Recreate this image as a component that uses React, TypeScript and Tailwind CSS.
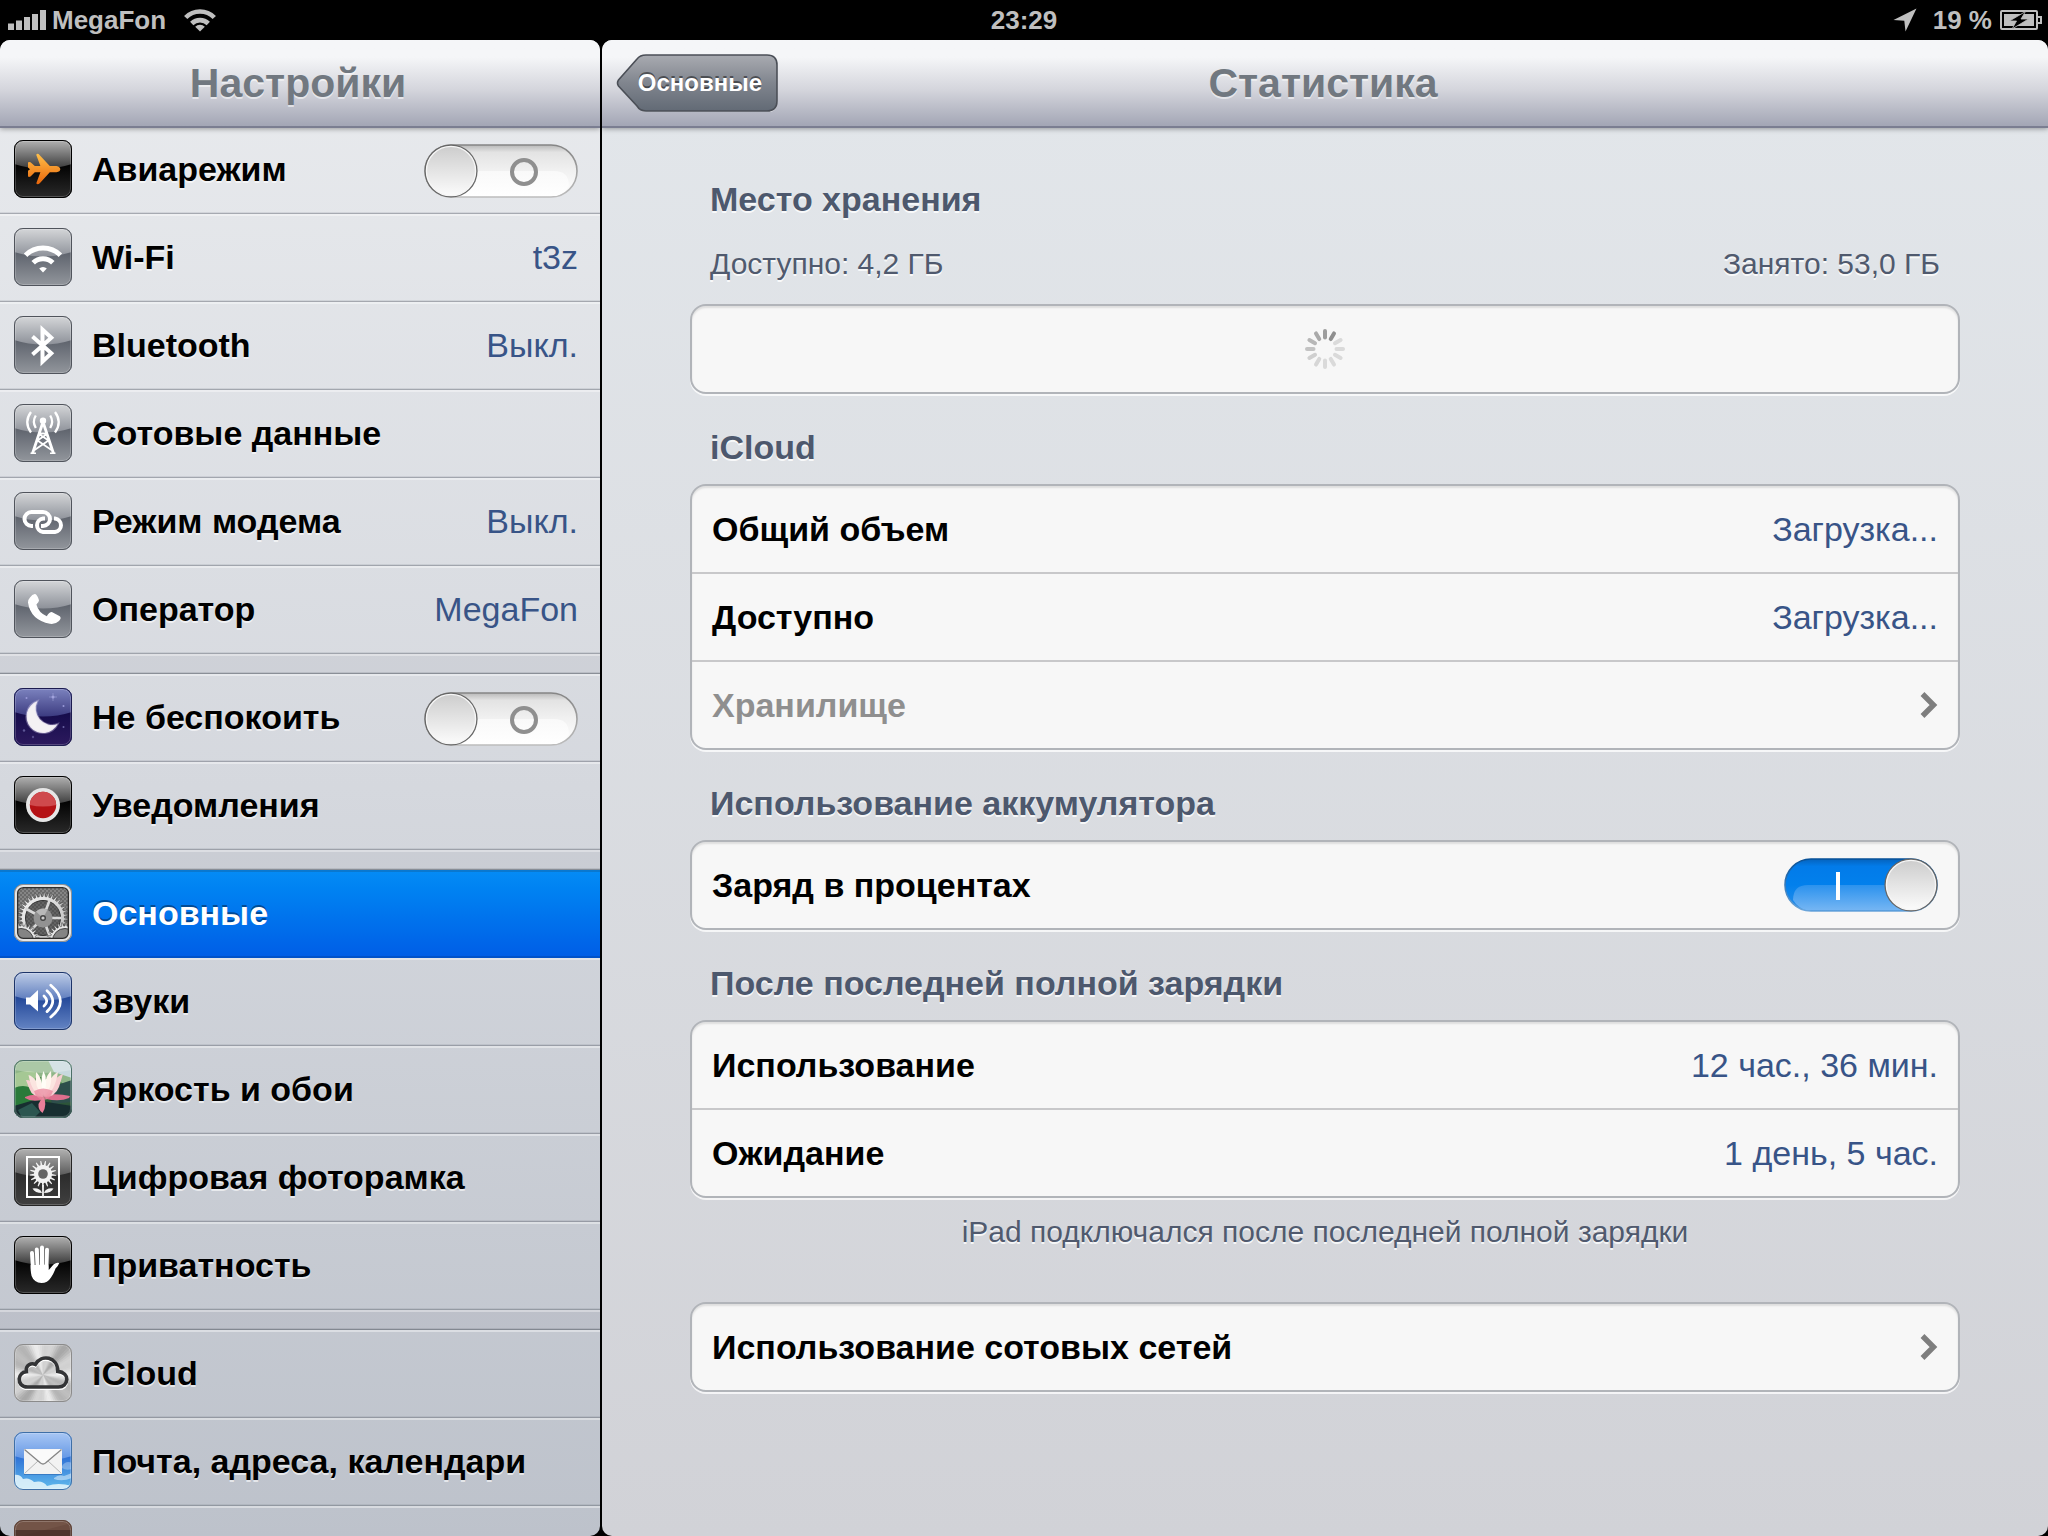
import { useState } from "react";
import type { ReactNode } from "react";

type TileProps = {
  id: string;
  colors: [string, string, string, string];
  edge: string;
  gloss?: boolean;
  children?: ReactNode;
};

// Rounded app tile: two-part gradient with the curved glass highlight on top
function Tile({ id, colors, edge, gloss = true, children }: TileProps) {
  return (
    <svg viewBox="0 0 58 58" className="size-[58px] shrink-0" aria-hidden="true">
      <defs>
        <linearGradient id={`${id}-base`} x1="0" y1="0" x2="0" y2="1">
          <stop offset="0.4" stopColor={colors[2]} />
          <stop offset="1" stopColor={colors[3]} />
        </linearGradient>
        <linearGradient id={`${id}-gloss`} x1="0" y1="0" x2="0" y2="1">
          <stop offset="0" stopColor={colors[0]} />
          <stop offset="1" stopColor={colors[1]} />
        </linearGradient>
        <clipPath id={`${id}-clip`}>
          <rect x="0" y="0" width="58" height="58" rx="9" />
        </clipPath>
      </defs>
      <g clipPath={`url(#${id}-clip)`}>
        <rect width="58" height="58" fill={`url(#${id}-base)`} />
        {gloss && <path d="M0 0H58V24Q29 33 0 24Z" fill={`url(#${id}-gloss)`} />}
        {children}
      </g>
      <rect x="1.5" y="1.5" width="55" height="55" rx="7.5" fill="none" stroke="#fff" strokeOpacity="0.2" />
      <rect x="0.5" y="0.5" width="57" height="57" rx="8.5" fill="none" stroke={edge} />
    </svg>
  );
}

const GRAY: [string, string, string, string] = ["#d6d8da", "#8d9199", "#5c616b", "#93979d"];
const BLACK: [string, string, string, string] = ["#b4b4b4", "#3a3a3a", "#000000", "#2a2a2a"];

function gearPath(cx: number, cy: number, outer: number, inner: number, teeth: number) {
  const pts: string[] = [];
  for (let i = 0; i < teeth; i++) {
    const a = (i / teeth) * Math.PI * 2;
    const s = (Math.PI * 2) / teeth;
    [
      [inner, a],
      [outer, a + s * 0.18],
      [outer, a + s * 0.38],
      [inner, a + s * 0.56],
    ].forEach(([r, t]) => {
      pts.push(`${(cx + r * Math.cos(t)).toFixed(2)} ${(cy + r * Math.sin(t)).toFixed(2)}`);
    });
  }
  return `M${pts.join("L")}Z`;
}

function AirplaneIcon() {
  return (
    <Tile id="air" colors={BLACK} edge="#000">
      <defs>
        <linearGradient id="air-fill" x1="0" y1="0" x2="0" y2="1">
          <stop offset="0" stopColor="#ffc04a" />
          <stop offset="1" stopColor="#e8650a" />
        </linearGradient>
      </defs>
      <path
        d="M14 22.5Q14.5 21.5 16.5 22.2L20.8 26H26.4L22.3 15Q22.5 13.2 24.6 14L35.8 26H42.5Q46.3 27 46.3 29.2Q46.3 31.5 42.5 32.3H35.8L26 43Q23.5 45.3 22.3 43.3L26.4 32.3H20.8L16.5 36.6Q14.5 37.4 14 36.2V30.8L16 29.2L14 27.6Z"
        fill="url(#air-fill)"
      />
    </Tile>
  );
}

function WifiIcon() {
  return (
    <Tile id="wifi" colors={GRAY} edge="#50545c">
      <g fill="none" stroke="#fff" strokeWidth="5">
        <path d="M11.6 27.2A24.5 24.5 0 0 1 46.4 27.2" />
        <path d="M19.2 34.8A14 14 0 0 1 38.8 34.8" />
      </g>
      <path d="M29 44.4L25.2 40.6A5.4 5.4 0 0 1 32.8 40.6Z" fill="#fff" />
    </Tile>
  );
}

function BluetoothIcon() {
  return (
    <Tile id="bt" colors={GRAY} edge="#50545c">
      <path d="M18.5 20.5L37.3 37.2L28.5 45.6V13.6L37.3 21.8L18.5 38.5" fill="none" stroke="#fff" strokeWidth="4" />
    </Tile>
  );
}

function TowerIcon() {
  return (
    <Tile id="tower" colors={GRAY} edge="#50545c">
      <circle cx="29" cy="16.8" r="3.2" fill="#fff" />
      <g fill="none" stroke="#fff" strokeWidth="2.3">
        <path d="M21.8 11.5Q18 17.5 21.8 24M36.2 11.5Q40 17.5 36.2 24" />
        <path d="M17 8Q9.5 18 17 28.5M41 8Q48.5 18 41 28.5" />
        <path d="M28.5 19.5L18.5 49.5M29.5 19.5L39.5 49.5" strokeWidth="2.8" />
        <path d="M25.5 29.5H32.5M23.5 36.5L33 30M34.5 36.5L25 30M20.5 46L34.5 36.5M37.5 46L23.5 36.5" strokeWidth="1.8" />
        <path d="M16.5 49.2H22M36 49.2H41.5" strokeWidth="1.6" />
      </g>
    </Tile>
  );
}

function LinkIcon() {
  return (
    <Tile id="link" colors={GRAY} edge="#50545c">
      <g fill="none" stroke="#fff" strokeWidth="4">
        <path d="M19 34H17.5A7 7 0 0 1 17.5 20H29A7 7 0 0 1 29 34H27" />
        <path d="M40 26.5H41A6.8 6.8 0 0 1 41 40H29A6.8 6.8 0 0 1 29 26.5H31" />
      </g>
    </Tile>
  );
}

function PhoneIcon() {
  return (
    <Tile id="phone" colors={GRAY} edge="#50545c">
      <path
        d="M16 17.5Q18.5 13.5 21.3 14Q23.3 15 25 20.2Q25 22.5 22.4 24.4Q24.5 32.5 32.8 36.2Q35.3 32 37.8 32L45.8 36.3Q47.8 38.2 45 41Q41.5 44.5 36 43.8Q16.5 40 14 22.5Q14 19.5 16 17.5Z"
        fill="#fff"
      />
    </Tile>
  );
}

function MoonIcon() {
  return (
    <Tile id="moon" colors={["#7d84c0", "#3c3b80", "#140b4a", "#2d1a5e"]} edge="#1c1c50">
      <g fill="#9a9ad8">
        <circle cx="12.5" cy="10" r="1" />
        <circle cx="39" cy="9" r="1.5" />
        <circle cx="49.5" cy="18" r="1" />
        <circle cx="10" cy="42.5" r="1.2" opacity="0.5" />
        <circle cx="49.5" cy="39" r="1" opacity="0.6" />
        <circle cx="19" cy="49" r="1.2" opacity="0.4" />
      </g>
      <path d="M39 5V13M35 9H43" stroke="#a9aee0" strokeWidth="0.5" />
      <path
        d="M23.5 13A16.5 16.5 0 1 0 43.7 36A16.5 16.5 0 0 1 23.5 13Z"
        fill="#f4f1f4"
        stroke="#d9d0ee"
        strokeOpacity="0.35"
        strokeWidth="2"
      />
    </Tile>
  );
}

function RecordIcon() {
  return (
    <Tile id="rec" colors={BLACK} edge="#000">
      <circle cx="29" cy="29" r="17" fill="#e6e6e6" />
      <circle cx="29" cy="29" r="13.2" fill="#b51215" />
      <path d="M15.8 29A13.2 13.2 0 0 1 42.2 29Q29 32 15.8 29Z" fill="#cf4a4d" />
    </Tile>
  );
}

function GearIcon() {
  return (
    <Tile id="gear" colors={["#8a8a8a", "#777", "#858585", "#6a6a6a"]} edge="#8b9199" gloss={false}>
      <defs>
        <pattern id="gear-dots" width="4" height="4" patternUnits="userSpaceOnUse">
          <circle cx="1" cy="1" r="0.7" fill="#3a3a3a" />
          <circle cx="3" cy="3" r="0.7" fill="#3a3a3a" />
        </pattern>
        <linearGradient id="gear-metal" x1="0" y1="0" x2="1" y2="1">
          <stop offset="0" stopColor="#fafafa" />
          <stop offset="1" stopColor="#b4b4b4" />
        </linearGradient>
      </defs>
      <rect width="58" height="58" fill="url(#gear-dots)" />
      <path d={gearPath(29, 34, 25.5, 21.5, 36)} fill="url(#gear-metal)" stroke="#333" strokeWidth="0.5" />
      <circle cx="29" cy="34" r="17.5" fill="#636363" stroke="#333" />
      <circle cx="29" cy="34" r="17.5" fill="url(#gear-dots)" />
      <path d="M29 34L35.5 16.5M29 34H47M29 34L35.5 51.5M29 34L16 47M29 34L11.5 24.5" stroke="#d8d8d8" strokeWidth="2.6" />
      <circle cx="29" cy="34" r="9.5" fill="#929292" />
      <path d="M29 34L22 27.6A9.5 9.5 0 0 1 33.5 25.7Z" fill="#b8b8b8" />
      <circle cx="29" cy="34" r="3" fill="#444" />
      <circle cx="29" cy="34" r="1.6" fill="#ccc" />
      <path d={gearPath(7, 57, 18.5, 15, 28)} fill="#e6e6e6" stroke="#333" strokeWidth="0.5" />
      <circle cx="7" cy="57" r="12.5" fill="#848484" stroke="#444" />
      <path d={gearPath(51, 57, 18.5, 15, 28)} fill="#e6e6e6" stroke="#333" strokeWidth="0.5" />
      <circle cx="51" cy="57" r="12.5" fill="#848484" stroke="#444" />
      <rect x="3.6" y="3.6" width="50.8" height="50.8" rx="5.5" fill="none" stroke="#2e2e2e" strokeWidth="1.4" />
      <rect x="1.8" y="1.8" width="54.4" height="54.4" rx="7.5" fill="none" stroke="#e2e2e2" strokeWidth="2.4" />
    </Tile>
  );
}

function SoundIcon() {
  return (
    <Tile id="sound" colors={["#c0cee8", "#5b7abc", "#1f4496", "#6585c4"]} edge="#1d3468">
      <path d="M12 25.5H16L24 18V39.5L16 32.5H12Z" fill="#fff" />
      <g fill="none" stroke="#fff" strokeWidth="2.8" strokeLinecap="round">
        <path d="M30 24Q35.5 29 30 34" />
        <path d="M33 18.8Q44.5 29 33 39.6" />
        <path d="M36.8 13.2Q56 29.5 36.8 45" />
      </g>
    </Tile>
  );
}

function LotusIcon() {
  return (
    <Tile id="lotus" colors={["#000", "#000", "#4e8a4b", "#15302c"]} edge="#4c6f68" gloss={false}>
      <path d="M0 0H58V30L44 20L20 16L0 30Z" fill="#8fb688" />
      <path d="M34 0H58V18L40 12Z" fill="#c7d9dd" />
      <path d="M0 14Q16 8 24 14L14 30L0 34Z" fill="#a5c894" />
      <path d="M0 28Q14 22 24 34L18 42L0 46Z" fill="#2a7a3a" />
      <path d="M34 28L58 20V42L38 44Z" fill="#2d4f4b" />
      <path d="M0 46L20 40L58 46V58H0Z" fill="#172e30" />
      <path d="M4 50L18 43L26 52L20 58H8Z" fill="#2b5650" />
      <path d="M11 37Q20 33 29 36L27 40Q17 42 11 38ZM56 36Q44 33 30 35L32 39Q46 42 55 38Z" fill="#de6f8d" />
      <path d="M29 36Q34 44 28.5 53Q24 50 24.5 44Z" fill="#ea7f99" />
      <path d="M12 20Q22 20 29 37Q18 37 15.5 29ZM49 14Q38 18 31 37Q41 37 45 27Z" fill="#f6cdd0" />
      <path d="M14.5 15Q23 17 29 37Q18 34 14.5 15ZM44 12Q34 17 30 37Q41 32 44 12Z" fill="#fbe5e0" />
      <path d="M22 12Q29 18 29.5 37Q20 28 22 12ZM37 11Q30 17 29 37Q39 29 37 11Z" fill="#fff5ee" />
      <path d="M29.5 11Q34.5 20 30 36Q25 22 29.5 11Z" fill="#fffdf6" />
      <path d="M20 31Q29 26 39 31Q36 40 29 40Q22 39 20 31Z" fill="#e9859c" opacity="0.75" />
      <path d="M0 0H58V10Q29 16 0 10Z" fill="#fff" opacity="0.25" />
    </Tile>
  );
}

function FrameIcon() {
  return (
    <Tile id="frame" colors={["#b5b5b5", "#565656", "#2a2a2a", "#404040"]} edge="#252525">
      <rect x="13" y="9" width="32" height="40" fill="none" stroke="#fff" strokeWidth="2" />
      <path d={gearPath(29, 26, 13.2, 9, 17)} fill="#f2f2f2" />
      <circle cx="29" cy="26" r="4.8" fill="#636363" />
      <path d="M29 37V49" stroke="#f2f2f2" strokeWidth="1.8" />
      <path d="M28 45Q21 45 18.5 40.5Q26 39.5 28 45ZM30 45Q37 45 39.5 40.5Q32 39.5 30 45Z" fill="#f2f2f2" />
    </Tile>
  );
}

function HandIcon() {
  return (
    <Tile id="hand" colors={BLACK} edge="#000">
      <g stroke="#fff" strokeWidth="4" strokeLinecap="round" fill="none">
        <path d="M18 17L19 34M22.8 13.5L23.6 32M28 11.6V32M33 13.8L32.4 32" />
      </g>
      <path
        d="M16.7 29L34.3 28.5L34.8 34L39.5 28.5Q42.5 26 45.3 27Q44.5 29.5 41.5 32.5Q40 37 37 41.5Q33.5 47 27.5 47Q20 46.5 17.6 40Q16.3 35 16.7 29Z"
        fill="#fff"
      />
    </Tile>
  );
}

function CloudIcon() {
  return (
    <Tile id="icloud" colors={["#ddd", "#ccc", "#d0d0d0", "#c4c4c4"]} edge="#8b8b8b" gloss={false}>
      {/* brushed metal: thin wedges with a slowly changing shade */}
      {Array.from({ length: 90 }, (_, i) => {
        const a = (i / 90) * Math.PI * 2;
        const b = ((i + 1.3) / 90) * Math.PI * 2;
        const shade = Math.round(203 + 24 * Math.cos(4 * a + 0.6) + 12 * Math.cos(10 * a));
        return (
          <path
            key={i}
            d={`M29 31L${29 + 50 * Math.cos(a)} ${31 + 50 * Math.sin(a)}L${29 + 50 * Math.cos(b)} ${31 + 50 * Math.sin(b)}Z`}
            fill={`rgb(${shade},${shade},${shade})`}
          />
        );
      })}
      <path
        d="M13.5 44.6C7.5 44.6 5 40.5 5.2 36.2C5.6 32 8.8 29.6 12.3 29.2C11.5 22.5 17.3 20 21.3 22C27.5 11.2 43.6 14 43.8 29C50 29.6 53 33 52.8 37C52.4 41.6 49.4 44.6 44.5 44.6Z"
        fill="none"
        stroke="#fff"
        strokeWidth="3"
      />
      <path
        d="M13.5 43C7.5 43 5 39 5.2 34.8C5.6 30.5 8.8 28 12.3 27.6C11.5 21 17.3 18.5 21.3 20.5C27.5 9.8 43.6 12.5 43.8 27.4C50 28 53 31.5 52.8 35.5C52.4 40 49.4 43 44.5 43Z"
        fill="none"
        stroke="#333436"
        strokeWidth="3.6"
      />
    </Tile>
  );
}

function MailIcon() {
  return (
    <Tile id="mail" colors={["#aac8f4", "#5f94e4", "#2c6dd4", "#62bdee"]} edge="#3f6fa6">
      <path d="M0 43Q6 42 9 47Q15 45 20 50Q29 48 33 54Q44 50 58 54V58H0Z" fill="#e9f7fc" opacity="0.85" />
      <path d="M40 46Q45 42 50 44L58 41V46Q48 50 40 47Z" fill="#fff" opacity="0.45" />
      <path d="M48 34Q52 28 58 31V37Q52 39 48 36Z" fill="#fff" opacity="0.3" />
      <rect x="10" y="17.5" width="38" height="25.5" fill="#1e4d96" opacity="0.4" />
      <rect x="10" y="17" width="38" height="25" fill="#f2f2f2" />
      <path d="M10.5 41.5L24 29M47.5 41.5L34 29" stroke="#b5b5b5" fill="none" />
      <path d="M10.5 17.5L26.5 31Q29 33 31.5 31L47.5 17.5" stroke="#858585" strokeWidth="1.3" fill="#fafafa" />
    </Tile>
  );
}

function Toggle({ id, defaultOn = false }: { id: string; defaultOn?: boolean }) {
  const [on, setOn] = useState(defaultOn);
  const knobX = on ? 127 : 27;

  return (
    <span className="relative block h-[54px] w-[154px] shrink-0">
      <svg viewBox="0 0 154 54" className="block size-full" aria-hidden="true">
        <defs>
          <linearGradient id={`${id}-track`} x1="0" y1="0" x2="0" y2="1">
            <stop offset="0" stopColor={on ? "#0563bd" : "#b9b9b9"} />
            <stop offset="0.14" stopColor={on ? "#027be9" : "#e3e3e3"} />
            <stop offset="0.5" stopColor={on ? "#0280ec" : "#f1f1f1"} />
            <stop offset="1" stopColor={on ? "#2c90ea" : "#ffffff"} />
          </linearGradient>
          <linearGradient id={`${id}-shine`} x1="0" y1="0" x2="0" y2="1">
            <stop offset="0" stopColor={on ? "#2b92ee" : "#f9f9f9"} />
            <stop offset="1" stopColor={on ? "#74b5f3" : "#ffffff"} />
          </linearGradient>
          <linearGradient id={`${id}-knob`} x1="0" y1="0" x2="0" y2="1">
            <stop offset="0" stopColor="#cdcdcd" />
            <stop offset="1" stopColor="#fbfbfb" />
          </linearGradient>
          <linearGradient id={`${id}-rim`} x1="0" y1="0" x2="0" y2="1">
            <stop offset="0" stopColor={on ? "#075097" : "#858585"} />
            <stop offset="1" stopColor={on ? "#6ba5da" : "#bdbdbd"} />
          </linearGradient>
        </defs>
        <rect x="1" y="1" width="152" height="52" rx="26" fill={`url(#${id}-track)`} stroke={`url(#${id}-rim)`} strokeWidth="1.6" />
        {on ? (
          <path d="M24 27H127V52H22Q14 50 9 42Q9 27 24 27Z" fill={`url(#${id}-shine)`} />
        ) : (
          <path d="M27 27H130Q145 27 145 42Q140 50 132 52H27Z" fill={`url(#${id}-shine)`} />
        )}
        {on ? (
          <rect x="52" y="14" width="4" height="28" fill="#fff" />
        ) : (
          <circle cx="100" cy="28" r="12" fill="none" stroke="#8f8f8f" strokeWidth="4" />
        )}
        <circle cx={knobX} cy="27" r="26.6" fill="#666" />
        <circle cx={knobX} cy="27" r="24.6" fill={`url(#${id}-knob)`} stroke="#f6f6f6" strokeWidth="1.4" />
      </svg>
      <input
        id={id}
        type="checkbox"
        role="switch"
        checked={on}
        onChange={(e) => setOn(e.target.checked)}
        className="absolute inset-0 size-full cursor-pointer opacity-0"
      />
    </span>
  );
}

type MenuItem = { label: string; icon: ReactNode; value?: string; toggle?: string; active?: boolean };

const groups: MenuItem[][] = [
  [
    { label: "Авиарежим", icon: <AirplaneIcon />, toggle: "airplane-mode" },
    { label: "Wi-Fi", icon: <WifiIcon />, value: "t3z" },
    { label: "Bluetooth", icon: <BluetoothIcon />, value: "Выкл." },
    { label: "Сотовые данные", icon: <TowerIcon /> },
    { label: "Режим модема", icon: <LinkIcon />, value: "Выкл." },
    { label: "Оператор", icon: <PhoneIcon />, value: "MegaFon" },
  ],
  [
    { label: "Не беспокоить", icon: <MoonIcon />, toggle: "do-not-disturb" },
    { label: "Уведомления", icon: <RecordIcon /> },
  ],
  [
    { label: "Основные", icon: <GearIcon />, active: true },
    { label: "Звуки", icon: <SoundIcon /> },
    { label: "Яркость и обои", icon: <LotusIcon /> },
    { label: "Цифровая фоторамка", icon: <FrameIcon /> },
    { label: "Приватность", icon: <HandIcon /> },
  ],
  [
    { label: "iCloud", icon: <CloudIcon /> },
    { label: "Почта, адреса, календари", icon: <MailIcon /> },
  ],
];

const rowBase = "flex h-[88px] items-center gap-5 pr-[22px] pl-3.5 pb-0.5 text-[34px] leading-10";
// dark hairline at the foot of a row, light one at the head of the next
const rowLine =
  "shadow-[inset_0_2px_0_rgba(255,255,255,0.4),inset_0_-1px_0_rgba(100,105,115,0.4),inset_0_-2px_0_rgba(110,115,125,0.15)]";

function MenuRow({ item }: { item: MenuItem }) {
  if (item.toggle) {
    return (
      <div className={`${rowBase} ${rowLine}`}>
        {item.icon}
        <label htmlFor={item.toggle} className="flex-1 font-bold [text-shadow:0_2px_0_rgba(255,255,255,0.6)]">
          {item.label}
        </label>
        <div className="pt-1">
          <Toggle id={item.toggle} />
        </div>
      </div>
    );
  }

  return (
    <a
      href="#"
      aria-current={item.active ? "page" : undefined}
      className={`${rowBase} ${
        item.active
          ? "bg-linear-to-b from-[#058cf5] to-[#015de6] text-white shadow-[inset_0_2px_0_#0a78cf,inset_0_-2px_0_#0152c9] [text-shadow:0_-2px_0_rgba(0,0,0,0.4)]"
          : `${rowLine} [text-shadow:0_2px_0_rgba(255,255,255,0.6)]`
      }`}
    >
      {item.icon}
      <span className="flex-1 font-bold">{item.label}</span>
      {item.value && <span className="text-[#385487] [text-shadow:none]">{item.value}</span>}
    </a>
  );
}

function StatusBar() {
  return (
    <div className="grid h-10 shrink-0 grid-cols-3 items-center bg-black px-2 text-[26px] leading-8 font-bold text-[#bfbfbf]">
      <div className="flex items-center gap-1.5">
        <svg viewBox="0 0 38 20" className="h-5 w-[38px]" fill="currentColor" aria-hidden="true">
          <path d="M0 13.5H6V20H0ZM8 10.5H14V20H8ZM16 7H22V20H16ZM24 4H30V20H24ZM32 0H38V20H32Z" />
        </svg>
        <span>MegaFon</span>
        <svg viewBox="0 0 32 24" className="ml-3 h-6 w-8" fill="none" stroke="currentColor" strokeWidth="4.6" aria-hidden="true">
          <path d="M1.7 9.5A20 20 0 0 1 30.3 9.5" />
          <path d="M7.7 15.5A11.8 11.8 0 0 1 24.3 15.5" />
          <path d="M16 23.5L11.2 18.8A6.6 6.6 0 0 1 20.8 18.8Z" fill="currentColor" stroke="none" />
        </svg>
      </div>
      <div className="text-center">23:29</div>
      <div className="flex items-center justify-end gap-2">
        <svg viewBox="0 0 24 24" className="mr-2 size-6" fill="currentColor" aria-hidden="true">
          <path d="M23.5 0.5L12.5 23.5L11.3 12.7L0.5 12Z" />
        </svg>
        <span>19 %</span>
        <svg viewBox="0 0 42 20" className="-mr-0.5 h-5 w-[42px]" aria-hidden="true">
          <rect x="1" y="1" width="36" height="18" rx="1" fill="none" stroke="currentColor" strokeWidth="2" />
          <path d="M38 6H42V14H38V12H40V8H38Z" fill="currentColor" />
          <rect x="4" y="4" width="30" height="12" fill="currentColor" />
          <path d="M25.5 1.5L9.5 11H16.5L12 19L28.5 9H21Z" fill="#000" stroke="#bfbfbf" strokeWidth="0.8" />
        </svg>
      </div>
    </div>
  );
}

const headerClass =
  "relative z-10 flex h-[88px] shrink-0 items-center justify-center border-b-2 border-[#7b7e91] bg-linear-to-b from-[#f5f6f8] from-20% via-[#d4d5dc] via-58% to-[#a3a6b5] pr-1 shadow-[0_1px_5px_rgba(0,0,0,0.35)]";
const titleClass = "text-[41px] leading-12 font-bold text-[#717880] [text-shadow:0_2px_0_rgba(255,255,255,0.55)]";

function BackButton() {
  return (
    <button type="button" className="absolute top-3.5 left-3.5 h-[58px] w-[162px] pr-4 text-right text-2xl font-bold text-white">
      <svg viewBox="0 0 162 58" className="absolute inset-0 size-full" aria-hidden="true">
        <defs>
          <linearGradient id="back-fill" x1="0" y1="0" x2="0" y2="1">
            <stop offset="0" stopColor="#a9abb1" />
            <stop offset="0.5" stopColor="#80858e" />
            <stop offset="1" stopColor="#626a75" />
          </linearGradient>
        </defs>
        <path d="M31 3H151Q161 3 161 12V49Q161 58 151 58H31Q25 58 22 53L2 31" fill="none" stroke="#fff" strokeOpacity="0.6" />
        <path
          d="M30 1H151Q161 1 161 11V47Q161 57 151 57H30Q24 57 21 52L2.5 32Q0.5 29 2.5 26L21 5Q24 1 30 1Z"
          fill="url(#back-fill)"
          stroke="#4b4f57"
          strokeWidth="1.6"
        />
      </svg>
      <span className="relative [text-shadow:0_-2px_0_rgba(0,0,0,0.45)]">Основные</span>
    </button>
  );
}

const spokes = ["#9d9d9d", "#8f8f8f", "#dadada", "#dadada", "#dadada", "#dadada", "#dadada", "#d6d6d6", "#cfcfcf", "#c3c3c3", "#b7b7b7", "#a9a9a9"];

function Spinner() {
  return (
    <svg viewBox="0 0 40 40" className="size-10" aria-hidden="true">
      {spokes.map((color, i) => (
        <rect key={i} x="18" y="0" width="4" height="10.5" rx="2" fill={color} transform={`rotate(${i * 30} 20 20)`} />
      ))}
    </svg>
  );
}

function Chevron() {
  return (
    <svg viewBox="0 0 18 26" className="h-[26px] w-[18px]" fill="none" stroke="#7e7e7e" strokeWidth="5.4" aria-hidden="true">
      <path d="M2.5 2L13.5 13L2.5 24" />
    </svg>
  );
}

function Card({ children }: { children: ReactNode }) {
  return (
    <div className="divide-y-2 divide-[#c8c8ca] overflow-hidden rounded-2xl border-2 border-[#b1b4b9] bg-[#f7f7f7] text-[34px] leading-10 shadow-[0_2px_0_rgba(255,255,255,0.75),inset_0_2px_2px_rgba(0,0,0,0.1)]">
      {children}
    </div>
  );
}

const cardRow = "box-content flex h-[86px] w-full max-w-[calc(100%-40px)] items-center justify-between px-5";

function ValueRow({ label, value }: { label: string; value: string }) {
  return (
    <div className={cardRow}>
      <span className="font-bold">{label}</span>
      <span className="text-[#385487]">{value}</span>
    </div>
  );
}

function Heading({ children }: { children: ReactNode }) {
  return (
    <h2 className="flex h-[90px] items-center px-5 pt-4 text-[34px] leading-10 font-bold text-[#4d586d] [text-shadow:0_2px_0_rgba(255,255,255,0.8)]">
      {children}
    </h2>
  );
}

const noteClass = "text-[30px] leading-9 text-[#505a6e] [text-shadow:0_2px_0_rgba(255,255,255,0.8)]";

export default function App() {
  return (
    <div className="flex h-screen flex-col overflow-hidden bg-black font-['Liberation_Sans',Arial,sans-serif] text-black">
      <StatusBar />

      <div className="flex min-h-0 flex-1 gap-0.5">
        {/* Menu */}
        <aside className="flex w-[600px] shrink-0 flex-col overflow-hidden rounded-[10px] bg-linear-to-b from-[#e9ebee] via-[#d5d8de] to-[#bdc2cb]">
          <header className={headerClass}>
            <h1 className={titleClass}>Настройки</h1>
          </header>
          <nav className="-mt-0.5 min-h-0 flex-1 overflow-hidden">
            {groups.map((group, i) => (
              <div key={i}>
                {i > 0 && (
                  <div className="h-5 bg-[#8b8fa0]/12 shadow-[inset_0_2px_0_rgba(255,255,255,0.35),inset_0_-1px_0_rgba(90,95,105,0.5),inset_0_-2px_0_rgba(110,115,125,0.2)]" />
                )}
                {group.map((item) => (
                  <MenuRow key={item.label} item={item} />
                ))}
              </div>
            ))}
            <div className={`${rowBase} ${rowLine}`}>
              <Tile id="contacts" colors={["#000", "#000", "#6b4c40", "#3a241c"]} edge="#5d4237" gloss={false}>
                <path d="M0 0H58V3L0 18Z" fill="#8a6a5c" opacity="0.25" />
                <rect y="10" width="58" height="48" fill="#412a22" opacity="0.7" />
              </Tile>
            </div>
          </nav>
        </aside>

        {/* Details */}
        <main className="flex min-w-0 flex-1 flex-col overflow-hidden rounded-[10px] bg-linear-to-b from-[#e3e7eb] to-[#d1d2d7]">
          <header className={headerClass}>
            <BackButton />
            <h1 className={titleClass}>Статистика</h1>
          </header>

          <div className="min-h-0 flex-1 overflow-hidden px-[88px] pt-[18px]">
            <section>
              <Heading>Место хранения</Heading>
              <div className={`${noteClass} flex justify-between px-5 pt-2.5 pb-[22px]`}>
                <span>Доступно: 4,2 ГБ</span>
                <span>Занято: 53,0 ГБ</span>
              </div>
              <Card>
                <div className="flex h-[86px] items-center justify-center">
                  <Spinner />
                </div>
              </Card>
            </section>

            <section>
              <Heading>iCloud</Heading>
              <Card>
                <ValueRow label="Общий объем" value="Загрузка..." />
                <ValueRow label="Доступно" value="Загрузка..." />
                <button type="button" disabled className={`${cardRow} font-bold text-[#8f8f8f]`}>
                  Хранилище
                  <Chevron />
                </button>
              </Card>
            </section>

            <section>
              <Heading>Использование аккумулятора</Heading>
              <Card>
                <div className={cardRow}>
                  <label htmlFor="battery-percent" className="font-bold">
                    Заряд в процентах
                  </label>
                  <Toggle id="battery-percent" defaultOn />
                </div>
              </Card>
            </section>

            <section>
              <Heading>После последней полной зарядки</Heading>
              <Card>
                <ValueRow label="Использование" value="12 час., 36 мин." />
                <ValueRow label="Ожидание" value="1 день, 5 час." />
              </Card>
              <p className={`${noteClass} pt-4 text-center`}>iPad подключался после последней полной зарядки</p>
            </section>

            <section className="pt-[52px]">
              <Card>
                <button type="button" className={`${cardRow} font-bold`}>
                  Использование сотовых сетей
                  <Chevron />
                </button>
              </Card>
            </section>
          </div>
        </main>
      </div>
    </div>
  );
}
